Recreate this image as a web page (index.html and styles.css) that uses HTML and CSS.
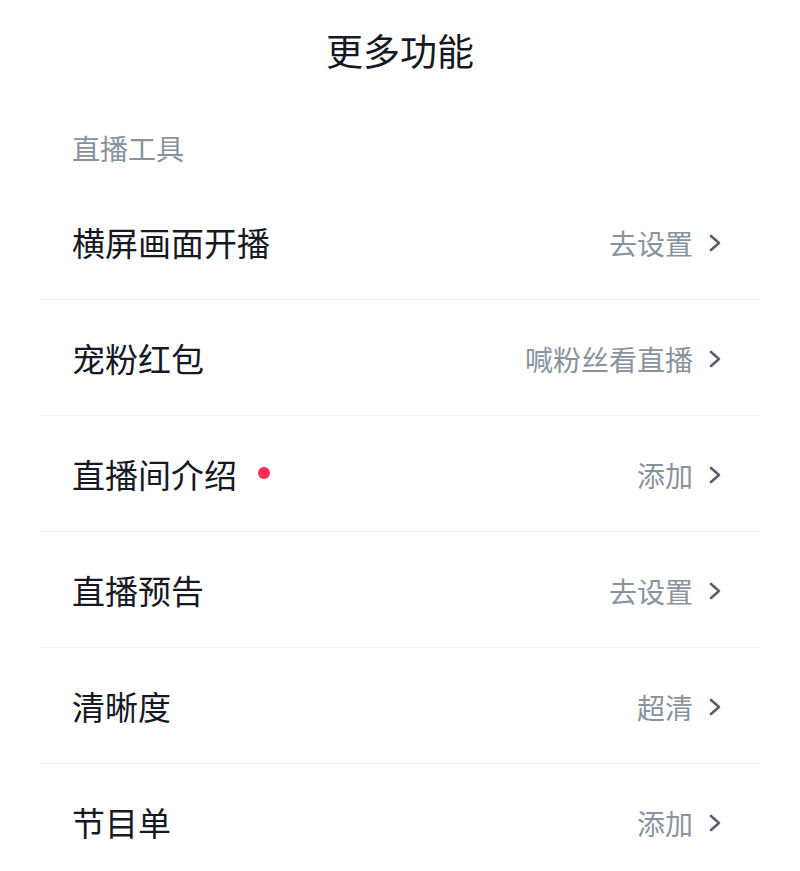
FILE: index.html
```html
<!DOCTYPE html>
<html lang="zh-CN">
<head>
<meta charset="utf-8">
<title>更多功能</title>
<link rel="stylesheet" href="styles.css">
</head>
<body>
<div class="page">
  <header class="title-bar"><h1 class="title">更多功能</h1></header>
  <div class="section-label">直播工具</div>
  <ul class="list">
    <li class="row"><span class="row-name">横屏画面开播</span><span class="row-action"><span class="row-value">去设置</span><svg class="chev" viewBox="0 0 16 20"><path d="M4 3 L12 10 L4 17"/></svg></span></li>
    <li class="row"><span class="row-name">宠粉红包</span><span class="row-action"><span class="row-value">喊粉丝看直播</span><svg class="chev" viewBox="0 0 16 20"><path d="M4 3 L12 10 L4 17"/></svg></span></li>
    <li class="row"><span class="row-name">直播间介绍<span class="dot"></span></span><span class="row-action"><span class="row-value">添加</span><svg class="chev" viewBox="0 0 16 20"><path d="M4 3 L12 10 L4 17"/></svg></span></li>
    <li class="row"><span class="row-name">直播预告</span><span class="row-action"><span class="row-value">去设置</span><svg class="chev" viewBox="0 0 16 20"><path d="M4 3 L12 10 L4 17"/></svg></span></li>
    <li class="row"><span class="row-name">清晰度</span><span class="row-action"><span class="row-value">超清</span><svg class="chev" viewBox="0 0 16 20"><path d="M4 3 L12 10 L4 17"/></svg></span></li>
    <li class="row"><span class="row-name">节目单</span><span class="row-action"><span class="row-value">添加</span><svg class="chev" viewBox="0 0 16 20"><path d="M4 3 L12 10 L4 17"/></svg></span></li>
  </ul>
</div>
</body>
</html>
```
FILE: styles.css
```css
html, body {
  margin: 0;
  padding: 0;
  background: #ffffff;
}
body {
  font-family: "Noto Sans CJK SC", "Noto Sans", sans-serif;
  color: #161823;
  overflow: hidden;
}
.page {
  width: 800px;
}
.title-bar {
  height: 100px;
  display: flex;
  align-items: center;
  justify-content: center;
}
.title {
  margin: 0;
  font-size: 37px;
  font-weight: 400;
  line-height: 1;
  color: #161823;
}
.section-label {
  height: 84px;
  box-sizing: border-box;
  padding: 34px 0 0 72px;
  font-size: 28px;
  line-height: 28px;
  color: #88929c;
}
.list {
  list-style: none;
  margin: 0 40px;
  padding: 0;
}
.row {
  height: 116px;
  box-sizing: border-box;
  border-bottom: 1px solid #f3f3f4;
  display: flex;
  align-items: center;
  justify-content: space-between;
  padding: 2px 37px 0 32px;
}
.row-name {
  display: flex;
  align-items: center;
  font-size: 33px;
  line-height: 1;
  color: #161823;
}
.dot {
  width: 12px;
  height: 12px;
  border-radius: 50%;
  background: #fe2c55;
  margin-left: 21px;
  margin-top: -4px;
}
.row-action {
  display: flex;
  align-items: center;
}
.row-value {
  font-size: 28px;
  line-height: 1;
  color: #8993a0;
}
.chev {
  width: 16px;
  height: 20px;
  margin-left: 14px;
  fill: none;
  stroke: #59616b;
  stroke-width: 2.6;
  stroke-linecap: round;
  stroke-linejoin: round;
}
```
